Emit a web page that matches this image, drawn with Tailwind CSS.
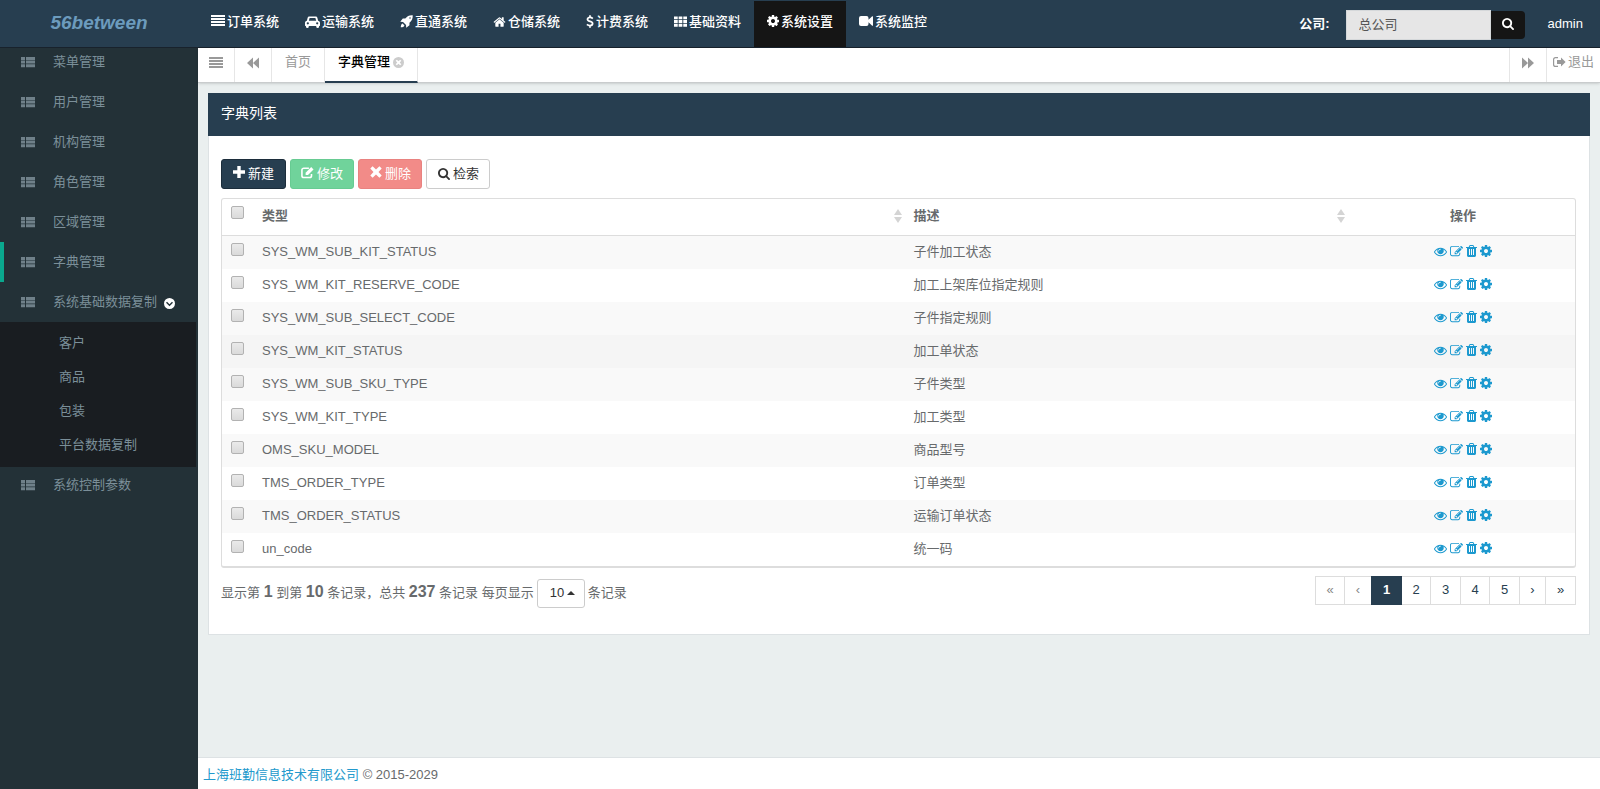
<!DOCTYPE html>
<html lang="zh-CN">
<head>
<meta charset="utf-8">
<title>56between - 字典管理</title>
<script src="https://cdn.jsdelivr.net/npm/@tailwindcss/browser@4"></script>
</head>
<body class="font-['Liberation_Sans','Noto_Sans_CJK_SC',sans-serif] text-[13px] leading-5 text-[#676a6c]">
<svg class="hidden" aria-hidden="true">
  <symbol id="i-bars" viewBox="0 0 14 12"><path d="M0 0h14v2H0zM0 3h14v2H0zM0 6h14v2H0zM0 9h14v2H0z"/></symbol>
  <symbol id="i-list" viewBox="0 0 14 12"><path d="M0 1h4v3H0zM5 1h9v3H5zM0 4.600h4v3H0zM5 4.600h9v3H5zM0 8.200h4v3H0zM5 8.200h9v3H5z"/></symbol>
  <symbol id="i-th" viewBox="0 0 14 12"><path d="M0 .5h4v3.100H0zM5 .5h4v3.100H5zM10 .5h4v3.100h-4zM0 4.500h4v3.100H0zM5 4.500h4v3.100H5zM10 4.500h4v3.100h-4zM0 8.500h4v3.100H0zM5 8.500h4v3.100H5zM10 8.500h4v3.100h-4z"/></symbol>
  <symbol id="i-car" viewBox="0 0 16 14"><path fill-rule="evenodd" d="M4.600 1h6.800c.8 0 1.500.5 1.700 1.300L14 5.600c1.100.1 2 1 2 2.100v3.100c0 .3-.2.500-.5.500H15V12a1.500 1.500 0 0 1-3 0v-.7H4v.7a1.500 1.500 0 0 1-3 0v-.7H.5c-.3 0-.5-.2-.5-.5V7.700c0-1.100.9-2 2-2.100l.9-3.300C3.100 1.500 3.800 1 4.600 1zm.3 1.600L4.100 5.600h7.800l-.8-3zM3 7.200a1.200 1.200 0 1 0 0 2.400 1.200 1.200 0 0 0 0-2.400zm10 0a1.200 1.200 0 1 0 0 2.400 1.200 1.200 0 0 0 0-2.400z"/></symbol>
  <symbol id="i-rocket" viewBox="0 0 14 14"><path fill-rule="evenodd" d="M13.700.3C10 0 7.700 1.300 5.700 3.800H3L.3 7.300l3 .2 3.200 3.200.2 3 3.500-2.700V8.300C12.700 6.300 14 4 13.700.3zM10.800 2.400a.8.8 0 1 1 0 1.600.8.8 0 0 1 0-1.600zM2.800 9.200C1.500 9.500.9 11.200.8 13.200c2 0 3.700-.6 4-2z"/></symbol>
  <symbol id="i-home" viewBox="0 0 1792 1792"><path d="M1472 992v480q0 26-19 45t-45 19h-384v-384h-256v384h-384q-26 0-45-19t-19-45v-480q0-1 .5-3t.5-3l575-474 575 474q1 2 1 6zm223-69l-62 74q-8 9-21 11h-3q-13 0-21-7l-692-577-692 577q-12 8-24 7-13-2-21-11l-62-74q-8-10-7-23.500t11-21.500l719-599q32-26 76-26t76 26l244 204v-195q0-14 9-23t23-9h192q14 0 23 9t9 23v408l219 182q10 8 11 21.500t-7 23.500z"/></symbol>
  <symbol id="i-usd" viewBox="0 0 8 14"><path fill="none" stroke="currentColor" stroke-width="1.900" d="M7 3.800C6.200 3 5.200 2.600 4 2.600 2.400 2.600 1.300 3.300 1.300 4.600c0 3 5.500 1.500 5.500 4.600 0 1.400-1.200 2.200-2.800 2.200-1.300 0-2.400-.4-3.300-1.300M4 .3v2.500M4 11v2.700"/></symbol>
  <symbol id="i-cog" viewBox="128 128 1536 1536"><path d="M1152 896q0-106-75-181t-181-75-181 75-75 181 75 181 181 75 181-75 75-181zm512-109v222q0 12-8 23t-20 13l-185 28q-19 54-39 91 35 50 107 138 10 12 10 25t-9 23q-27 37-99 108t-94 71q-12 0-26-9l-138-108q-44 23-91 38-16 136-29 186-7 28-36 28h-222q-14 0-24.500-8.500t-11.500-21.500l-28-184q-49-16-90-37l-141 107q-10 9-25 9-14 0-25-11-126-114-165-168-7-10-7-23 0-12 8-23 15-21 51-66.500t54-70.500q-27-50-41-99l-183-27q-13-2-21-12.500t-8-23.500v-222q0-12 8-23t19-13l186-28q14-46 39-92-40-57-107-138-10-12-10-24 0-10 9-23 26-36 98.500-107.500t94.500-71.500q13 0 26 10l138 107q44-23 91-38 16-136 29-186 7-28 36-28h222q14 0 24.500 8.500t11.500 21.500l28 184q49 16 90 37l142-107q9-9 24-9 13 0 25 10 129 119 165 170 7 8 7 22 0 12-8 23-15 21-51 66.500t-54 70.500q26 50 41 98l183 28q13 2 21 12.500t8 23.500z"/></symbol>
  <symbol id="i-video" viewBox="0 0 14 12"><path d="M2 1h5.500a2 2 0 0 1 2 2v1.700L13.200 1.300c.3-.3.800-.1.800.4v8.600c0 .5-.5.700-.8.400L9.500 7.300V9a2 2 0 0 1-2 2H2a2 2 0 0 1-2-2V3a2 2 0 0 1 2-2z"/></symbol>
  <symbol id="i-search" viewBox="64 128 1664 1664"><path d="M1216 832q0-185-131.500-316.500t-316.500-131.500-316.500 131.500-131.500 316.500 131.500 316.500 316.500 131.500 316.500-131.500 131.500-316.500zm512 832q0 52-38 90t-90 38q-54 0-90-38l-343-342q-179 124-399 124-143 0-273.500-55.500t-225-150-150-225-55.500-273.500 55.500-273.500 150-225 225-150 273.500-55.500 273.500 55.500 225 150 150 225 55.500 273.500q0 220-124 399l343 343q37 37 37 90z"/></symbol>
  <symbol id="i-eye" viewBox="0 0 1792 1792"><path d="M1664 960q-152-236-381-353 61 104 61 225 0 185-131.500 316.500t-316.500 131.500-316.500-131.500-131.500-316.500q0-121 61-225-229 117-381 353 133 205 333.500 326.500t434.500 121.500 434.500-121.500 333.500-326.500zm-720-384q0-20-14-34t-34-14q-125 0-214.500 89.500t-89.500 214.500q0 20 14 34t34 14 34-14 14-34q0-86 61-147t147-61q20 0 34-14t14-34zm848 384q0 34-20 69-140 230-376.500 368.500t-499.500 138.500-499.500-139-376.500-368q-20-35-20-69t20-69q140-229 376.500-368t499.500-139 499.500 139 376.500 368q20 35 20 69z"/></symbol>
  <symbol id="i-pencil" viewBox="0 64 1792 1664"><path d="M888 1184l116-116-152-152-116 116v56h96v96h56zm440-720q-16-16-33 1l-350 350q-17 17-1 33t33-1l350-350q17-17 1-33zm80 594v190q0 119-84.500 203.500t-203.500 84.500h-832q-119 0-203.500-84.500t-84.500-203.500v-832q0-119 84.500-203.500t203.500-84.500h832q63 0 117 25 15 7 18 23 3 17-9 29l-49 49q-14 14-32 8-23-6-45-6h-832q-66 0-113 47t-47 113v832q0 66 47 113t113 47h832q66 0 113-47t47-113v-126q0-13 9-22l64-64q15-15 35-7t20 29zm-96-738l288 288-672 672h-288v-288zm444 132l-92 92-288-288 92-92q28-28 68-28t68 28l152 152q28 28 28 68t-28 68z"/></symbol>
  <symbol id="i-trash" viewBox="192 128 1408 1536"><path d="M704 1376v-704q0-14-9-23t-23-9h-64q-14 0-23 9t-9 23v704q0 14 9 23t23 9h64q14 0 23-9t9-23zm256 0v-704q0-14-9-23t-23-9h-64q-14 0-23 9t-9 23v704q0 14 9 23t23 9h64q14 0 23-9t9-23zm256 0v-704q0-14-9-23t-23-9h-64q-14 0-23 9t-9 23v704q0 14 9 23t23 9h64q14 0 23-9t9-23zm-544-992h448l-48-117q-7-9-17-11h-317q-10 2-17 11zm928 32v64q0 14-9 23t-23 9h-96v948q0 83-47 143.500t-113 60.500h-832q-66 0-113-58.500t-47-141.500v-952h-96q-14 0-23-9t-9-23v-64q0-14 9-23t23-9h309l70-167q15-37 54-63t79-26h320q40 0 79 26t54 63l70 167h309q14 0 23 9t9 23z"/></symbol>
  <symbol id="i-back" viewBox="0 0 12 12"><path d="M6 .5v11L0 6zM12 .5v11L6 6z"/></symbol>
  <symbol id="i-fwd" viewBox="0 0 12 12"><path d="M0 .5v11L6 6zM6 .5v11L12 6z"/></symbol>
  <symbol id="i-close" viewBox="0 0 12 12"><path fill-rule="evenodd" d="M6 0a6 6 0 1 1 0 12A6 6 0 0 1 6 0zM4.200 2.900L2.900 4.200 4.700 6 2.900 7.800l1.300 1.300L6 7.300l1.800 1.800 1.300-1.300L7.300 6l1.800-1.800-1.300-1.300L6 4.700z"/></symbol>
  <symbol id="i-down" viewBox="0 0 12 12"><path fill-rule="evenodd" d="M6 0a6 6 0 1 1 0 12A6 6 0 0 1 6 0zM3.300 4L2.200 5.100 6 8.900l3.800-3.800L8.700 4 6 6.700z"/></symbol>
  <symbol id="i-out" viewBox="0 0 13 12"><path d="M5 1v1.200H2.600c-.8 0-1.400.6-1.400 1.400v4.800c0 .8.600 1.400 1.400 1.400H5V11H2.600A2.600 2.600 0 0 1 0 8.400V3.600A2.600 2.600 0 0 1 2.600 1zM8 1.400L12.600 6 8 10.600V8H4V4h4z"/></symbol>
  <symbol id="i-plus" viewBox="0 0 12 12"><path d="M4.300 0h3.400v4.300H12v3.400H7.700V12H4.300V7.700H0V4.300h4.300z"/></symbol>
  <symbol id="i-edit" viewBox="0 0 14 13"><path fill="none" stroke="currentColor" stroke-width="1.700" d="M8.500 1.900H3A2 2 0 0 0 1 3.900v6a2 2 0 0 0 2 2h6.300a2 2 0 0 0 2-2V8"/><path d="M5 9.300V6.700L11 .7l2.500 2.500-6 6.100z"/></symbol>
  <symbol id="i-x" viewBox="0 0 12 12"><path d="M2.600.3L6 3.500 9.400.3l2.300 2.300L8.500 6l3.200 3.400-2.300 2.300L6 8.500l-3.400 3.200L.3 9.400 3.500 6 .3 2.600z"/></symbol>
  <symbol id="i-sort" viewBox="0 0 8 14"><path d="M4 0l4 6H0zM0 8h8l-4 6z"/></symbol>
</svg>

<div class="flex min-h-screen flex-col">
  <header class="flex h-12 items-start border-b border-[#18222c] bg-[#273e50] text-white">
    <a href="#" class="flex h-[46px] w-[198px] shrink-0 items-center justify-center text-[19px] font-bold italic text-[#6c9bbd]">56between</a>
    <nav class="mt-px flex flex-1 font-medium">
      <a href="#" class="flex h-[46px] gap-[2px] px-[13px] pt-[11px]"><svg class="mt-[3px] h-3 w-[14px] fill-current"><use href="#i-bars"/></svg>订单系统</a>
      <a href="#" class="flex h-[46px] gap-[2px] px-[13px] pt-[11px]"><svg class="mt-[3px] h-[14px] w-[15px] fill-current"><use href="#i-car"/></svg>运输系统</a>
      <a href="#" class="flex h-[46px] gap-[2px] px-[13px] pt-[11px]"><svg class="mt-[3px] h-[13px] w-[13px] fill-current"><use href="#i-rocket"/></svg>直通系统</a>
      <a href="#" class="flex h-[46px] gap-[2px] px-[13px] pt-[11px]"><svg class="mt-[3px] h-[14px] w-[13px] fill-current"><use href="#i-home"/></svg>仓储系统</a>
      <a href="#" class="flex h-[46px] gap-[2px] px-[13px] pt-[11px]"><svg class="mt-[3px] h-[13px] w-2"><use href="#i-usd"/></svg>计费系统</a>
      <a href="#" class="flex h-[46px] gap-[2px] px-[13px] pt-[11px]"><svg class="mt-[3px] h-[13px] w-[13px] fill-current"><use href="#i-th"/></svg>基础资料</a>
      <a href="#" class="flex h-[46px] gap-[2px] bg-[#151515] px-[13px] pt-[11px]"><svg class="mt-[3px] size-3 fill-current"><use href="#i-cog"/></svg>系统设置</a>
      <a href="#" class="flex h-[46px] gap-[2px] px-[13px] pt-[11px]"><svg class="mt-[3px] h-3 w-[14px] fill-current"><use href="#i-video"/></svg>系统监控</a>
    </nav>
    <form class="mt-[10px] flex items-start pr-[23px]">
      <label for="company" class="mr-4 mt-1 font-bold">公司:</label>
      <input id="company" value="总公司" readonly class="h-[30px] w-[145px] border border-[#d5d8da] bg-[#e6e6e6] px-3 pb-[3px] text-[#555]">
      <button type="button" aria-label="搜索" class="mt-px flex h-7 w-[34px] items-center justify-center rounded-r-sm bg-[#151515] pb-[2px]"><svg class="h-3 w-3 fill-current"><use href="#i-search"/></svg></button>
    </form>
    <a href="#" class="mr-[17px] mt-[14px]">admin</a>
  </header>

  <div class="flex flex-1">
    <aside class="w-[198px] shrink-0 bg-[#233137] text-[#7b8f99]">
      <nav class="-mt-1.5">
        <a href="#" class="flex h-10 items-center gap-[18px] pl-[21px]"><svg class="h-3 w-[14px] fill-[#6f8089]"><use href="#i-list"/></svg>菜单管理</a>
        <a href="#" class="flex h-10 items-center gap-[18px] pl-[21px]"><svg class="h-3 w-[14px] fill-[#6f8089]"><use href="#i-list"/></svg>用户管理</a>
        <a href="#" class="flex h-10 items-center gap-[18px] pl-[21px]"><svg class="h-3 w-[14px] fill-[#6f8089]"><use href="#i-list"/></svg>机构管理</a>
        <a href="#" class="flex h-10 items-center gap-[18px] pl-[21px]"><svg class="h-3 w-[14px] fill-[#6f8089]"><use href="#i-list"/></svg>角色管理</a>
        <a href="#" class="flex h-10 items-center gap-[18px] pl-[21px]"><svg class="h-3 w-[14px] fill-[#6f8089]"><use href="#i-list"/></svg>区域管理</a>
        <a href="#" class="flex h-10 items-center gap-[18px] border-l-4 border-[#0aa88e] pl-[17px]"><svg class="h-3 w-[14px] fill-[#6f8089]"><use href="#i-list"/></svg>字典管理</a>
        <a href="#" class="flex h-10 items-center gap-[18px] pl-[21px]"><svg class="h-3 w-[14px] fill-[#6f8089]"><use href="#i-list"/></svg><span class="flex items-center gap-[7px]">系统基础数据复制<svg class="mt-[2px] h-[11px] w-[11px] fill-white"><use href="#i-down"/></svg></span></a>
        <div class="mr-[2px] bg-[#191d21] pb-[5px] pt-1">
          <a href="#" class="flex h-[34px] items-center pl-[59px]">客户</a>
          <a href="#" class="flex h-[34px] items-center pl-[59px]">商品</a>
          <a href="#" class="flex h-[34px] items-center pl-[59px]">包装</a>
          <a href="#" class="flex h-[34px] items-center pl-[59px]">平台数据复制</a>
        </div>
        <a href="#" class="flex h-9 items-center gap-[18px] pl-[21px]"><svg class="h-3 w-[14px] fill-[#6f8089]"><use href="#i-list"/></svg>系统控制参数</a>
      </nav>
    </aside>

    <div class="flex min-w-0 flex-1 flex-col bg-[#eaefef]">
      <div class="flex h-[35px] border-b border-[#c9cccd] bg-white text-[#999] shadow-sm">
        <button type="button" aria-label="菜单" class="flex w-[37px] justify-center border-r border-[#e6e6e6] pt-[9px]"><svg class="h-3 w-[14px] fill-current"><use href="#i-bars"/></svg></button>
        <button type="button" aria-label="向左" class="flex w-[37px] justify-center border-r border-[#e6e6e6] pt-[9px]"><svg class="h-3 w-3 fill-current"><use href="#i-back"/></svg></button>
        <a href="#" class="border-r border-[#e6e6e6] px-[13px] pt-1">首页</a>
        <a href="#" class="flex h-[35px] gap-[3px] border-b-2 border-r border-b-[#273e50] border-r-[#e6e6e6] px-[13px] pt-1 font-medium text-black">字典管理<svg class="mt-[5px] h-[11px] w-[11px] fill-[#ccc]"><use href="#i-close"/></svg></a>
        <button type="button" aria-label="向右" class="ml-auto flex w-[38px] justify-center border-x border-[#e6e6e6] pt-[9px]"><svg class="h-3 w-3 fill-current"><use href="#i-fwd"/></svg></button>
        <a href="#" class="flex gap-[2px] px-1.5 pt-1"><svg class="mt-[4px] h-3 w-[13px] fill-current"><use href="#i-out"/></svg>退出</a>
      </div>

      <main class="flex-1 px-[10px] pt-[10px]">
        <section class="border border-[#dde2e4] border-t-0 bg-white">
          <h2 class="-mx-px flex h-[43px] items-center bg-[#273e50] px-[13px] pb-[3px] text-sm text-white">字典列表</h2>
          <div class="pb-[26px] pl-3 pr-[13px] pt-[23px]">
            <div class="flex gap-1">
              <button type="button" class="flex h-[30px] items-start gap-[3px] rounded-[3px] border border-[#1c2d3b] bg-[#273e50] px-[11px] pt-1 text-white"><svg class="mt-[2px] h-3 w-3 fill-current"><use href="#i-plus"/></svg>新建</button>
              <button type="button" class="flex h-[30px] items-start gap-[3px] rounded-[3px] border border-[#67cb92] bg-[#70d39b] px-[10px] pt-1 text-white"><svg class="mt-[2px] h-[13px] w-[13px] fill-current"><use href="#i-edit"/></svg>修改</button>
              <button type="button" class="flex h-[30px] items-start gap-[3px] rounded-[3px] border border-[#e98280] bg-[#f28b88] pl-[11px] pr-[10px] pt-1 text-white"><svg class="mt-[2px] h-3 w-3 fill-current"><use href="#i-x"/></svg>删除</button>
              <button type="button" class="flex h-[30px] items-start gap-[3px] rounded-[3px] border border-[#ccc] bg-white pl-[11px] pr-[10px] pt-1 text-[#333]"><svg class="mt-[4px] h-3 w-3 fill-current"><use href="#i-search"/></svg>检索</button>
            </div>

            <div class="mt-[9px] rounded-[3px] border border-b-2 border-[#ddd]">
              <table class="w-full table-fixed border-separate border-spacing-0">
                <colgroup><col class="w-[31px]"><col class="w-[48%]"><col class="w-[33%]"><col></colgroup>
                <thead>
                  <tr class="h-[37px] text-left">
                    <th class="border-b border-[#ddd] pl-[9px] align-top"><input type="checkbox" aria-label="全选" class="mt-[7px] block size-[13px] appearance-none rounded-[2px] border border-[#b2b2b2] bg-linear-to-b from-[#eaeaea] to-[#dadada]"></th>
                    <th class="border-b border-[#ddd] pb-[2px] pl-[9px] font-bold"><span class="flex items-center justify-between">类型<svg class="h-[14px] w-2 fill-[#d4d4d4]"><use href="#i-sort"/></svg></span></th>
                    <th class="border-b border-[#ddd] pb-[2px] pl-[11px] pr-1 font-bold"><span class="flex items-center justify-between">描述<svg class="h-[14px] w-2 fill-[#d4d4d4]"><use href="#i-sort"/></svg></span></th>
                    <th class="border-b border-[#ddd] pb-[2px] pl-[2px] text-center font-bold">操作</th>
                  </tr>
                </thead>
                <tbody id="rows"></tbody>
              </table>
            </div>

            <div class="mt-2 flex items-start justify-between">
              <div class="mt-[3px] flex items-center whitespace-pre">
                <span class="mb-[3px]">显示第 <b class="text-base leading-5">1</b> 到第 <b class="text-base leading-5">10</b> 条记录，总共 <b class="text-base leading-5">237</b> 条记录 </span><label for="size" class="mb-[2px]">每页显示</label>
                <span class="relative mx-[3px]"><select id="size" class="block h-[29px] w-12 appearance-none rounded-[3px] border border-[#ccc] bg-white pb-[2px] pl-3 text-[#333]"><option>10</option><option>25</option><option>50</option></select><svg class="pointer-events-none absolute right-[10px] top-[12px] h-1 w-2 fill-[#333]" viewBox="0 0 8 4"><path d="M0 4l4-4 4 4z"/></svg></span>
                <span class="mb-[2px]">条记录</span>
              </div>
              <nav aria-label="分页" class="flex h-[29px] border border-[#ddd] text-[#273e50]">
                <a href="#" class="flex w-[28px] items-center justify-center pb-[2px] text-[#888]">«</a>
                <a href="#" class="flex w-[27px] items-center justify-center border-l border-[#ddd] pb-[2px] text-[#888]">‹</a>
                <a href="#" class="-my-px flex w-[31px] items-center justify-center bg-[#273e50] pb-[2px] font-bold text-white">1</a>
                <a href="#" class="flex w-[28px] items-center justify-center pb-[2px]">2</a>
                <a href="#" class="flex w-[30px] items-center justify-center border-l border-[#ddd] pb-[2px]">3</a>
                <a href="#" class="flex w-[29px] items-center justify-center border-l border-[#ddd] pb-[2px]">4</a>
                <a href="#" class="flex w-[30px] items-center justify-center border-l border-[#ddd] pb-[2px]">5</a>
                <a href="#" class="flex w-[26px] items-center justify-center border-l border-[#ddd] pb-[2px]">›</a>
                <a href="#" class="flex w-[30px] items-center justify-center border-l border-[#ddd] pb-[2px]">»</a>
              </nav>
            </div>
          </div>
        </section>
      </main>

      <footer class="h-8 border-t border-[#dde2e4] bg-white px-[5px] pt-[7px]"><a href="#" class="text-[#2299cc]">上海班勤信息技术有限公司</a> © 2015-2029</footer>
    </div>
  </div>
</div>

<template id="row">
  <tr class="h-[33px] odd:bg-[#f9f9f9] nth-4:bg-[#f5f5f5]">
    <td class="pl-[9px] align-top"><input type="checkbox" class="mt-[7px] block size-[13px] appearance-none rounded-[2px] border border-[#b2b2b2] bg-linear-to-b from-[#eaeaea] to-[#dadada]"></td>
    <td class="pl-[9px] pt-1.5 align-top"></td>
    <td class="pl-[11px] pt-1.5 align-top"></td>
    <td class="pl-[3px] pt-[5px] align-top"><span class="flex h-5 items-center justify-center gap-[3px] text-[#1c99cf]">
      <a href="#" aria-label="查看"><svg class="size-[13px] fill-current"><use href="#i-eye"/></svg></a>
      <a href="#" aria-label="编辑"><svg class="size-[13px] fill-current"><use href="#i-pencil"/></svg></a>
      <a href="#" aria-label="删除"><svg class="h-3 w-[11px] fill-current"><use href="#i-trash"/></svg></a>
      <a href="#" aria-label="设置"><svg class="size-3 fill-current"><use href="#i-cog"/></svg></a>
    </span></td>
  </tr>
</template>
<script>
  const data = [
    ['SYS_WM_SUB_KIT_STATUS', '子件加工状态'],
    ['SYS_WM_KIT_RESERVE_CODE', '加工上架库位指定规则'],
    ['SYS_WM_SUB_SELECT_CODE', '子件指定规则'],
    ['SYS_WM_KIT_STATUS', '加工单状态'],
    ['SYS_WM_SUB_SKU_TYPE', '子件类型'],
    ['SYS_WM_KIT_TYPE', '加工类型'],
    ['OMS_SKU_MODEL', '商品型号'],
    ['TMS_ORDER_TYPE', '订单类型'],
    ['TMS_ORDER_STATUS', '运输订单状态'],
    ['un_code', '统一码']
  ];
  const body = document.getElementById('rows');
  const tpl = document.getElementById('row');
  for (const [type, desc] of data) {
    const row = tpl.content.cloneNode(true);
    const cells = row.querySelectorAll('td');
    cells[0].firstElementChild.setAttribute('aria-label', type);
    cells[1].textContent = type;
    cells[2].textContent = desc;
    body.appendChild(row);
  }
</script>
</body>
</html>
